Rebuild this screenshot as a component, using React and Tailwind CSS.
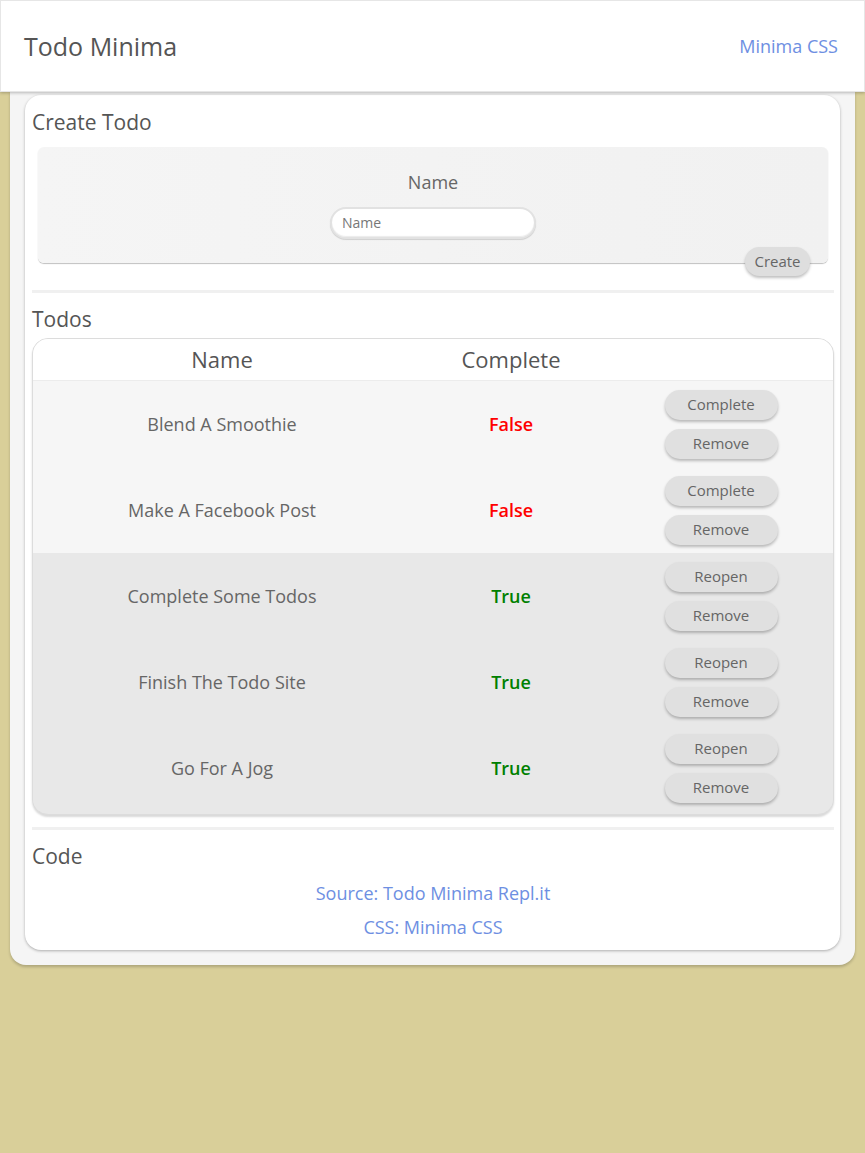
import React from "react";

const todos = [
  { name: "Blend A Smoothie", done: false },
  { name: "Make A Facebook Post", done: false },
  { name: "Complete Some Todos", done: true },
  { name: "Finish The Todo Site", done: true },
  { name: "Go For A Jog", done: true },
];

function Btn({ children, className = "" }) {
  return (
    <button
      className={
        "h-[30px] w-[113px] rounded-full bg-[#e0e0e0] text-[15px] text-[#666] leading-none shadow-[0_2px_3px_rgba(0,0,0,0.25)] " +
        className
      }
    >
      {children}
    </button>
  );
}

export default function App() {
  return (
    <div className="min-h-[1153px] bg-[#d9cf99] font-['Open_Sans',sans-serif] text-[#555]">
      <header className="relative z-10 flex h-[92px] items-center justify-between border border-[#e6e6e6] bg-white pl-[23px] pr-[26px] shadow-[0_1px_3px_rgba(0,0,0,0.25)]">
        <h1 className="text-[25px] leading-[32px] text-[#555]">Todo Minima</h1>
        <a className="text-[18px] text-[#6e8fe2]">Minima CSS</a>
      </header>

      <main className="-mt-[1px] mx-[10px] rounded-b-[16px] bg-[#f5f5f5] px-[15px] pb-[15px] pt-[4px] shadow-[0_2px_3px_rgba(0,0,0,0.2)]">
        <div className="flex flex-col rounded-[16px] bg-white pb-[10px] pl-[7px] pr-[6px] pt-[13px] shadow-[0_1px_3px_rgba(0,0,0,0.3)]">
          <h2 className="text-[21px] leading-[28px] text-[#555]">Create Todo</h2>

          <div className="mx-[6px] mt-[11px] flex flex-col items-center rounded-[6px] bg-gradient-to-r from-[#f5f5f5] to-[#f1f1f1] pt-[22px] shadow-[0_1px_1px_rgba(0,0,0,0.25)]">
            <label className="text-[18px] leading-[26px] text-[#666]">Name</label>
            <div className="mt-[12px] flex h-[32px] w-[206px] items-center rounded-full border-2 border-[#e2e2e2] bg-white pb-[2px] pl-[10px] text-[14px] text-[#777] shadow-[inset_0_-1px_1px_rgba(0,0,0,0.08),0_1px_1px_rgba(0,0,0,0.15)]">
              Name
            </div>
            <button className="-mb-[13px] mr-[18px] mt-[8px] h-[29px] w-[65px] self-end rounded-full bg-[#dedede] text-[15px] leading-none text-[#666] shadow-[0_2px_3px_rgba(0,0,0,0.25)]">
              Create
            </button>
          </div>

          <hr className="mt-[27px] h-[3px] border-0 bg-[#f0f0f0]" />

          <h2 className="mt-[12px] text-[21px] leading-[28px] text-[#555]">Todos</h2>

          <div className="mt-[5px] overflow-hidden rounded-[16px] border border-[#dcdcdc] bg-[#e8e8e8] pb-[3px] shadow-[0_2px_2px_rgba(0,0,0,0.15)]">
            <div className="grid h-[42px] grid-cols-[378px_200px_1fr] items-center border-b border-[#ececec] bg-white text-[22px] text-[#555]">
              <div className="text-center">Name</div>
              <div className="text-center">Complete</div>
              <div />
            </div>
            {todos.map((t) => (
              <div
                key={t.name}
                className={
                  "grid h-[86px] grid-cols-[378px_200px_1fr] items-center " +
                  (t.done ? "bg-[#e8e8e8]" : "bg-[#f6f6f6]")
                }
              >
                <div className="text-center text-[18px] text-[#666]">{t.name}</div>
                <div
                  className={
                    "text-center text-[18px] font-semibold " +
                    (t.done ? "text-[#008000]" : "text-[#ff0000]")
                  }
                >
                  {t.done ? "True" : "False"}
                </div>
                <div className="flex flex-col items-center gap-[9px] pr-[2px]">
                  <Btn>{t.done ? "Reopen" : "Complete"}</Btn>
                  <Btn>Remove</Btn>
                </div>
              </div>
            ))}
          </div>

          <hr className="mt-[12px] h-[3px] border-0 bg-[#f0f0f0]" />

          <h2 className="mt-[12px] text-[21px] leading-[28px] text-[#555]">Code</h2>
          <a className="mt-[10px] text-center text-[18px] leading-[26px] text-[#6e8fe2]">
            Source: Todo Minima Repl.it
          </a>
          <a className="mt-[8px] text-center text-[18px] leading-[26px] text-[#6e8fe2]">
            CSS: Minima CSS
          </a>
        </div>
      </main>
    </div>
  );
}
